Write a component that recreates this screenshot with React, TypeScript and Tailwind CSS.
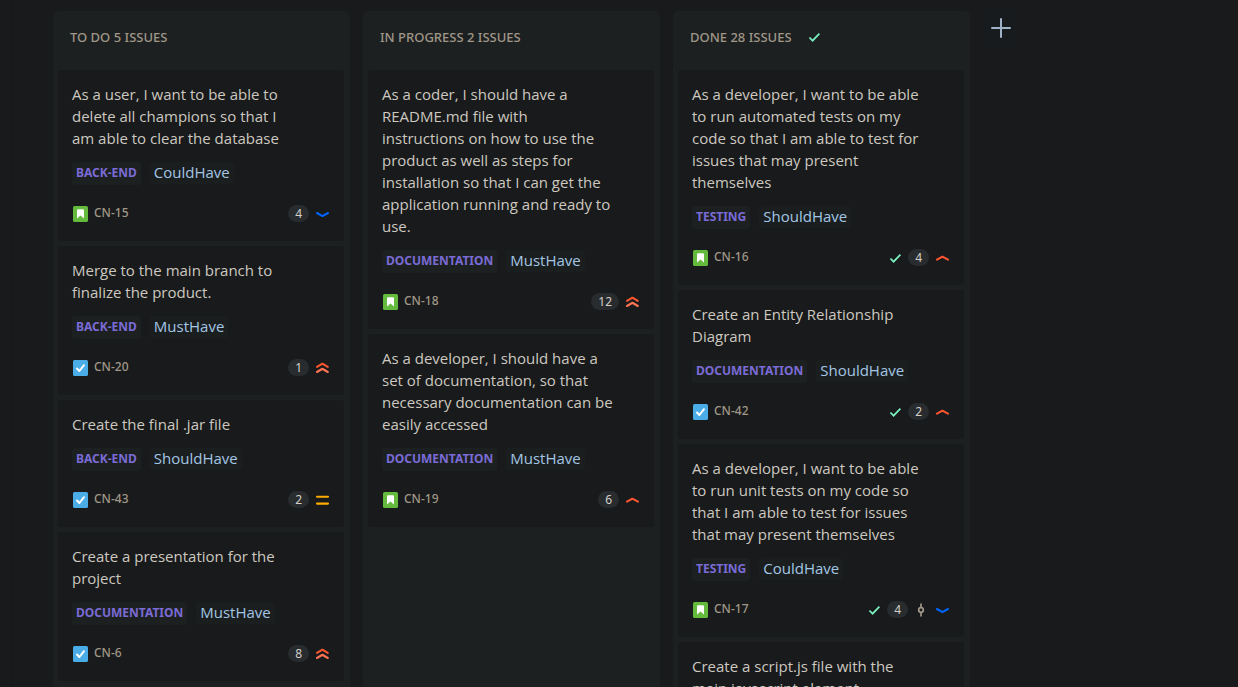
type Priority = "low" | "medium" | "high" | "highest";

type Issue = {
  id: string;
  kind: "story" | "task";
  title: string;
  epic: string;
  label: string;
  points: number;
  priority: Priority;
  done?: boolean;
  commit?: boolean;
};

type Column = { name: string; count: number; done?: boolean; issues: Issue[] };

const columns: Column[] = [
  {
    name: "To do",
    count: 5,
    issues: [
      { id: "CN-15", kind: "story", title: "As a user, I want to be able to\ndelete all champions so that I\nam able to clear the database", epic: "Back-end", label: "CouldHave", points: 4, priority: "low" },
      { id: "CN-20", kind: "task", title: "Merge to the main branch to\nfinalize the product.", epic: "Back-end", label: "MustHave", points: 1, priority: "highest" },
      { id: "CN-43", kind: "task", title: "Create the final .jar file", epic: "Back-end", label: "ShouldHave", points: 2, priority: "medium" },
      { id: "CN-6", kind: "task", title: "Create a presentation for the\nproject", epic: "Documentation", label: "MustHave", points: 8, priority: "highest" },
    ],
  },
  {
    name: "In progress",
    count: 2,
    issues: [
      { id: "CN-18", kind: "story", title: "As a coder, I should have a\nREADME.md file with\ninstructions on how to use the\nproduct as well as steps for\ninstallation so that I can get the\napplication running and ready to\nuse.", epic: "Documentation", label: "MustHave", points: 12, priority: "highest" },
      { id: "CN-19", kind: "story", title: "As a developer, I should have a\nset of documentation, so that\nnecessary documentation can be\neasily accessed", epic: "Documentation", label: "MustHave", points: 6, priority: "high" },
    ],
  },
  {
    name: "Done",
    count: 28,
    done: true,
    issues: [
      { id: "CN-16", kind: "story", title: "As a developer, I want to be able\nto run automated tests on my\ncode so that I am able to test for\nissues that may present\nthemselves", epic: "Testing", label: "ShouldHave", points: 4, priority: "high", done: true },
      { id: "CN-42", kind: "task", title: "Create an Entity Relationship\nDiagram", epic: "Documentation", label: "ShouldHave", points: 2, priority: "high", done: true },
      { id: "CN-17", kind: "story", title: "As a developer, I want to be able\nto run unit tests on my code so\nthat I am able to test for issues\nthat may present themselves", epic: "Testing", label: "CouldHave", points: 4, priority: "low", done: true, commit: true },
      { id: "CN-41", kind: "task", title: "Create a script.js file with the\nmain javascript element", epic: "Back-end", label: "MustHave", points: 2, priority: "high", done: true },
    ],
  },
];

function Check() {
  return (
    <svg className="size-4 shrink-0" viewBox="0 0 16 16" fill="none" stroke="#79f2c0" strokeWidth="1.7" aria-hidden="true">
      <path d="M3.4 8.5 6.6 11.7 13.4 4.6" />
    </svg>
  );
}

function Commit() {
  return (
    <svg className="size-4 shrink-0" viewBox="0 0 16 16" fill="none" stroke="#a09788" strokeWidth="1.7" aria-hidden="true">
      <path d="M8 1.5V5.5M8 10.5V14.5" />
      <circle cx="8" cy="8" r="2.3" />
    </svg>
  );
}

function PriorityIcon({ priority }: { priority: Priority }) {
  return (
    <svg className="size-4 shrink-0" viewBox="0 0 16 16" fill="none" strokeWidth="2.1" strokeLinecap="round" strokeLinejoin="round" aria-hidden="true">
      {priority === "low" && <path stroke="#0065ff" d="M3 7 8 9.8Q8.4 10 8.8 9.8L14 7" />}
      {priority === "medium" && <path stroke="#ffab00" d="M3 4.8H14M3 11.6H14" />}
      {priority === "high" && <path stroke="#ff5630" d="M3 9.6 8 6.8Q8.4 6.6 8.8 6.8L14 9.6" />}
      {priority === "highest" && (
        <>
          <path stroke="#ff5630" d="M3 6.8 8 3.8Q8.4 3.6 8.8 3.8L13.8 6.8" />
          <path stroke="#ff7452" d="M3 12 8 9Q8.4 8.8 8.8 9L13.8 12" />
        </>
      )}
    </svg>
  );
}

function KindIcon({ kind }: { kind: Issue["kind"] }) {
  return (
    <svg className="size-4 shrink-0" viewBox="0 0 16 16" aria-hidden="true">
      <rect width="15" height="16" x="1" rx="1.6" fill={kind === "story" ? "#63ba3c" : "#4bade8"} />
      {kind === "story" ? (
        <path fill="#fff" d="M5 12.6V4.4Q5 3.2 6.2 3.2H10.8Q12 3.2 12 4.4V12.6L8.5 9.4Z" />
      ) : (
        <path fill="none" stroke="#fff" strokeWidth="2" strokeLinecap="round" strokeLinejoin="round" d="M5 8.5 7.4 11 12 5.2" />
      )}
    </svg>
  );
}

function Card({ issue }: { issue: Issue }) {
  return (
    <article className="rounded-[3px] bg-[#181a1b] px-3.5 pt-[13px] pb-4">
      <h3 className="font-['Open_Sans','Noto_Sans',sans-serif] text-[15px] leading-[22px] whitespace-pre-line text-[#cdc8c0]">{issue.title}</h3>
      <div className="mt-[13px] flex h-[23px] items-start gap-[9px]">
        <span className="h-[23px] rounded-[3px] bg-[#1d2021] px-1 text-[12px] leading-[22px] font-bold text-[#7a6bd6] uppercase">{issue.epic}</span>
        <a href="#" className="h-[22px] rounded-[3px] bg-[#1b1e1f] px-1 font-['Open_Sans','Noto_Sans',sans-serif] text-[15px] leading-5 text-[#a3c6e4]">{issue.label}</a>
      </div>
      <div className="mt-[17px] flex h-[23px] items-center">
        <KindIcon kind={issue.kind} />
        <a href="#" className="ml-1.5 h-[23px] text-[12px] leading-[22px] font-medium text-[#a09788]">{issue.id}</a>
        <div className="ml-auto flex items-center gap-[5px]">
          {issue.done && <Check />}
          <span className="h-[17px] min-w-5 rounded-full bg-[#282c2e] px-[7px] text-center text-[12px] leading-[17px] text-[#d3cfc9]">{issue.points}</span>
          {issue.commit && <Commit />}
          <PriorityIcon priority={issue.priority} />
        </div>
      </div>
    </article>
  );
}

export default function App() {
  return (
    <main className="flex h-screen overflow-hidden bg-[#181a1b] font-['Noto_Sans','Open_Sans',sans-serif]">
      <div className="w-3 shrink-0 border-r border-[#151718]" />
      <div className="flex min-w-0 flex-1 items-stretch gap-[13px] pt-[11px] pl-[41px]">
        {columns.map((column) => (
          <section key={column.name} className="w-[297px] shrink-0 rounded-t-md bg-[#1c2021] pr-1.5 pl-[5px]">
            <header className="flex h-[59px] items-start gap-3.5 px-3 pt-[18px]">
              <h2 className="text-[13px] leading-4 font-medium text-[#a09788] uppercase">
                {column.name} {column.count} issues
              </h2>
              {column.done && <Check />}
            </header>
            <div className="flex flex-col gap-[5px]">
              {column.issues.map((issue) => (
                <Card key={issue.id} issue={issue} />
              ))}
            </div>
          </section>
        ))}
        <button type="button" aria-label="Add column" className="ml-px flex size-[34px] shrink-0 items-center justify-center rounded-[3px] bg-[#171b1d]">
          <svg className="size-5" viewBox="0 0 20 20" fill="none" stroke="#9fb3c8" strokeWidth="2" strokeLinecap="round" aria-hidden="true">
            <path d="M10 1V19M1 10H19" />
          </svg>
        </button>
      </div>
    </main>
  );
}
